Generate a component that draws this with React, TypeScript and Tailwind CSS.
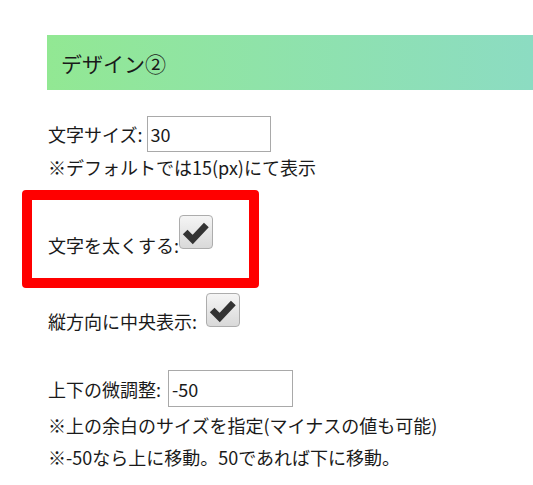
import React from "react";

function CheckBox() {
  return (
    <div className="w-[34px] h-[34px] shrink-0 rounded-[4px] border border-[#adadad] bg-gradient-to-b from-[#f5f5f5] to-[#d9d9d9] flex items-center justify-center">
      <svg width="34" height="34" viewBox="0 0 34 34">
        <polyline
          points="5.5,17 13.5,25 28,9.5"
          fill="none"
          stroke="#333333"
          strokeWidth="7"
          strokeLinecap="butt"
          strokeLinejoin="miter"
        />
      </svg>
    </div>
  );
}

export default function App() {
  return (
    <div
      className="w-[533px] h-[485px] bg-white text-[#1a1a1a] overflow-hidden"
      style={{ fontFamily: '"Noto Sans CJK JP", "Noto Sans", sans-serif' }}
    >
      <div className="mt-[35px] ml-[47px] h-[55px] bg-gradient-to-r from-[#92e893] to-[#8cdcc2] flex items-center pl-[14px]">
        <span className="text-[21px] leading-[24px]">デザイン②</span>
      </div>

      <div className="mt-[26px] ml-[48px] flex items-center h-[36px] text-[18px]">
        <span className="leading-[24px]">文字サイズ:</span>
        <input
          readOnly
          defaultValue="30"
          className="ml-[5px] w-[124px] h-[36px] border border-[#a9a9a9] px-[2px] text-[18px] leading-[24px] outline-none"
          style={{ fontFamily: '"Noto Sans CJK JP", "Noto Sans", sans-serif' }}
        />
      </div>
      <div className="ml-[48px] text-[18px] leading-[30px]">※デフォルトでは15(px)にて表示</div>

      <div className="mt-[8px] ml-[22px] w-[237px] h-[98px] border-[10px] border-[#ff0000] rounded-[4px] pl-[16px] pt-[15px]">
        <div className="flex items-end text-[18px]">
          <span className="leading-[24px]">文字を太くする:</span>
          <div className="mb-[8px] ml-[0px]">
            <CheckBox />
          </div>
        </div>
      </div>

      <div className="mt-[5px] ml-[48px] flex items-end text-[18px]">
        <span className="leading-[24px]">縦方向に中央表示:</span>
        <div className="mb-[6px] ml-[9px]">
          <CheckBox />
        </div>
      </div>

      <div className="mt-[37px] ml-[48px] flex items-center h-[37px] text-[18px]">
        <span className="leading-[24px]">上下の微調整:</span>
        <input
          readOnly
          defaultValue="-50"
          className="ml-[7px] w-[125px] h-[37px] border border-[#a9a9a9] px-[3px] text-[18px] leading-[24px] outline-none"
          style={{ fontFamily: '"Noto Sans CJK JP", "Noto Sans", sans-serif' }}
        />
      </div>
      <div className="mt-[2px] ml-[48px] text-[18px] leading-[32px]">
        <div>※上の余白のサイズを指定(マイナスの値も可能)</div>
        <div>※-50なら上に移動。50であれば下に移動。</div>
      </div>
    </div>
  );
}
